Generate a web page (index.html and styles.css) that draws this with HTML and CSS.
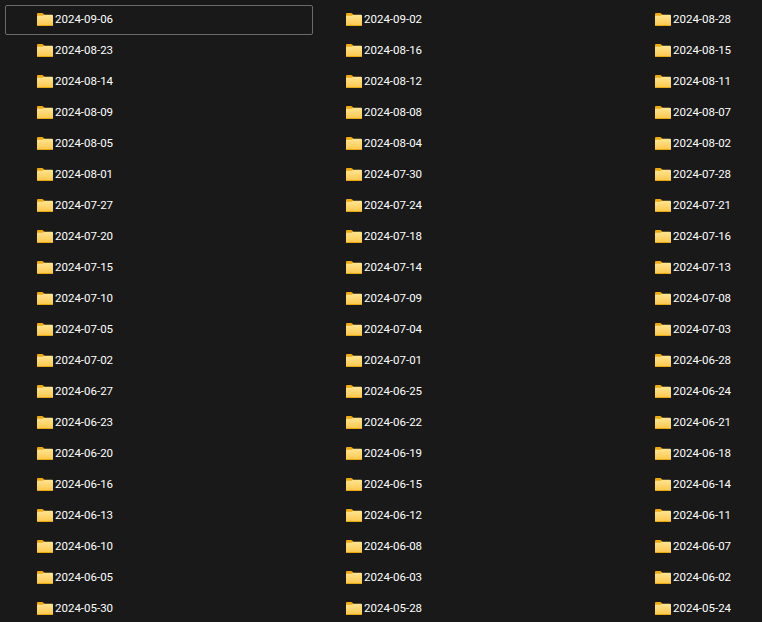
FILE: index.html
```html
<!DOCTYPE html>
<html lang="en">
<head>
    <meta charset="UTF-8">
    <title>Folders</title>
    <link rel="stylesheet" href="styles.css">
</head>
<body>

<svg class="icon-defs" width="0" height="0">
    <defs>
        <linearGradient id="folderFill" x1="0" y1="0" x2="0" y2="1">
            <stop offset="0" stop-color="#ffe591"/>
            <stop offset="1" stop-color="#fcc64a"/>
        </linearGradient>
        <symbol id="folder" viewBox="0 0 16 13">
            <path d="M0 4v-3q0-1 1-1h4.200q.6 0 1 .5l1.300 1.500v2z" fill="#efa90b"/>
            <path d="M0 3.700q0-.9 1-.9h4.600l1.600-1h7.800q1 0 1 1v9.200q0 1-1 1h-14q-1 0-1-1z" fill="url(#folderFill)"/>
            <path d="M0 12h16q0 1-1 1h-14q-1 0-1-1z" fill="#e8a80f"/>
        </symbol>
    </defs>
</svg>

<div class="folder-grid" id="folderGrid"></div>

<script>
    const names = [
        '2024-09-06', '2024-09-02', '2024-08-28',
        '2024-08-23', '2024-08-16', '2024-08-15',
        '2024-08-14', '2024-08-12', '2024-08-11',
        '2024-08-09', '2024-08-08', '2024-08-07',
        '2024-08-05', '2024-08-04', '2024-08-02',
        '2024-08-01', '2024-07-30', '2024-07-28',
        '2024-07-27', '2024-07-24', '2024-07-21',
        '2024-07-20', '2024-07-18', '2024-07-16',
        '2024-07-15', '2024-07-14', '2024-07-13',
        '2024-07-10', '2024-07-09', '2024-07-08',
        '2024-07-05', '2024-07-04', '2024-07-03',
        '2024-07-02', '2024-07-01', '2024-06-28',
        '2024-06-27', '2024-06-25', '2024-06-24',
        '2024-06-23', '2024-06-22', '2024-06-21',
        '2024-06-20', '2024-06-19', '2024-06-18',
        '2024-06-16', '2024-06-15', '2024-06-14',
        '2024-06-13', '2024-06-12', '2024-06-11',
        '2024-06-10', '2024-06-08', '2024-06-07',
        '2024-06-05', '2024-06-03', '2024-06-02',
        '2024-05-30', '2024-05-28', '2024-05-24'
    ];

    const grid = document.getElementById('folderGrid');

    names.forEach((name, i) => {
        const item = document.createElement('div');
        item.className = i === 0 ? 'folder-item selected' : 'folder-item';
        item.innerHTML = `
            <svg class="folder-icon"><use href="#folder"></use></svg>
            <span class="folder-name">${name}</span>
        `;
        grid.appendChild(item);
    });
</script>

</body>
</html>
```

FILE: styles.css
```css
html, body {
    height: 100%;
}
body {
    margin: 0;
    background-color: #191919;
    color: #ffffff;
    font-family: Roboto, sans-serif;
    font-size: 11.5px;
    overflow: hidden;
}
.icon-defs {
    display: block;
}
.folder-grid {
    display: grid;
    grid-template-columns: 308px 308px 1fr;
    grid-auto-rows: 30px;
    column-gap: 1px;
    row-gap: 1px;
    padding: 5px 0 0 5px;
    height: 100vh;
    box-sizing: border-box;
    overflow: hidden;
}
.folder-item {
    display: flex;
    align-items: center;
    gap: 2px;
    padding: 0 0 2px 31px;
    box-sizing: border-box;
    border: 1px solid transparent;
    border-radius: 2px;
}
.folder-item.selected {
    border-color: #6b6b6b;
}
.folder-icon {
    width: 16px;
    height: 13px;
    flex-shrink: 0;
}
```
